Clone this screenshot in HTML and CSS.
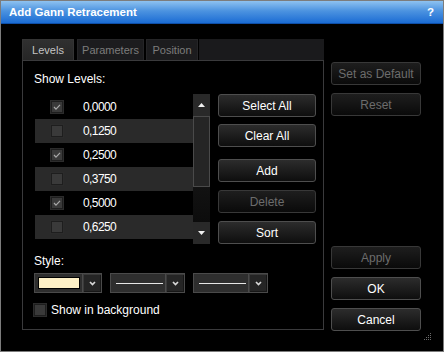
FILE: index.html
```html
<!DOCTYPE html>
<html>
<head>
<meta charset="utf-8">
<link rel="stylesheet" href="styles.css">
</head>
<body>
<div class="window">
  <div class="titlebar"><span class="title">Add Gann Retracement</span><span class="help">?</span></div>
  <div class="content">
    <div class="left">
      <div class="tabs">
        <div class="tab active w-levels">Levels</div>
        <div class="tab w-params">Parameters</div>
        <div class="tab w-pos">Position</div>
        <div class="tab-fill"></div>
      </div>
      <div class="panel">
        <div class="label">Show Levels:</div>
        <div class="levels">
          <div class="list">
            <div class="rows">
              <div class="row"><span class="checkbox"><svg viewBox="0 0 12 12" width="12" height="12"><polyline points="3,6 5,8.2 9,3.8" fill="none" stroke="#a8a8a8" stroke-width="1.2"/></svg></span><span class="val">0,0000</span></div>
              <div class="row alt"><span class="checkbox"></span><span class="val">0,1250</span></div>
              <div class="row"><span class="checkbox"><svg viewBox="0 0 12 12" width="12" height="12"><polyline points="3,6 5,8.2 9,3.8" fill="none" stroke="#a8a8a8" stroke-width="1.2"/></svg></span><span class="val">0,2500</span></div>
              <div class="row alt"><span class="checkbox"></span><span class="val">0,3750</span></div>
              <div class="row"><span class="checkbox"><svg viewBox="0 0 12 12" width="12" height="12"><polyline points="3,6 5,8.2 9,3.8" fill="none" stroke="#a8a8a8" stroke-width="1.2"/></svg></span><span class="val">0,5000</span></div>
              <div class="row alt"><span class="checkbox"></span><span class="val">0,6250</span></div>
            </div>
            <div class="scrollbar">
              <div class="sb-btn"><svg width="7" height="4" viewBox="0 0 7 4"><polygon points="3.5,0 7,4 0,4" fill="#f0f0f0"/></svg></div>
              <div class="sb-track"><div class="sb-thumb"></div></div>
              <div class="sb-btn"><svg width="7" height="4" viewBox="0 0 7 4"><polygon points="0,0 7,0 3.5,4" fill="#f0f0f0"/></svg></div>
            </div>
          </div>
          <div class="level-buttons">
            <div class="btn">Select All</div>
            <div class="btn mt7">Clear All</div>
            <div class="btn mt12">Add</div>
            <div class="btn mt8 disabled">Delete</div>
            <div class="btn mt8">Sort</div>
          </div>
        </div>
        <div class="label style-label">Style:</div>
        <div class="combos">
          <div class="combo color-combo">
            <div class="combo-value"><span class="swatch"></span></div>
            <div class="combo-btn"><svg width="7" height="5" viewBox="0 0 7 5"><polyline points="1,1 3.5,3.5 6,1" fill="none" stroke="#d8d8d8" stroke-width="1.7"/></svg></div>
          </div>
          <div class="combo line-combo">
            <div class="combo-value"><span class="line"></span></div>
            <div class="combo-btn"><svg width="7" height="5" viewBox="0 0 7 5"><polyline points="1,1 3.5,3.5 6,1" fill="none" stroke="#d8d8d8" stroke-width="1.7"/></svg></div>
          </div>
          <div class="combo line-combo">
            <div class="combo-value"><span class="line"></span></div>
            <div class="combo-btn"><svg width="7" height="5" viewBox="0 0 7 5"><polyline points="1,1 3.5,3.5 6,1" fill="none" stroke="#d8d8d8" stroke-width="1.7"/></svg></div>
          </div>
        </div>
        <div class="bg-check"><span class="checkbox"></span><span>Show in background</span></div>
      </div>
    </div>
    <div class="right">
      <div class="btn disabled">Set as Default</div>
      <div class="btn disabled">Reset</div>
      <div class="btn disabled push">Apply</div>
      <div class="btn">OK</div>
      <div class="btn">Cancel</div>
    </div>
  </div>
  <svg class="grip" width="8" height="7" viewBox="0 0 8 7">
    <rect x="6" y="0" width="1" height="1" fill="#6a6a6a"/>
    <rect x="4" y="2" width="1" height="1" fill="#6a6a6a"/>
    <rect x="6" y="2" width="1" height="1" fill="#6a6a6a"/>
    <rect x="2" y="4" width="1" height="1" fill="#6a6a6a"/>
    <rect x="4" y="4" width="1" height="1" fill="#6a6a6a"/>
    <rect x="6" y="4" width="1" height="1" fill="#6a6a6a"/>
    <rect x="0" y="6" width="1" height="1" fill="#6a6a6a"/>
    <rect x="2" y="6" width="1" height="1" fill="#6a6a6a"/>
    <rect x="4" y="6" width="1" height="1" fill="#6a6a6a"/>
    <rect x="6" y="6" width="1" height="1" fill="#6a6a6a"/>
  </svg>
</div>
</body>
</html>
```
FILE: styles.css
```css
html, body {
  margin: 0;
  padding: 0;
  background: #000;
}
body {
  font-family: "Liberation Sans", Arial, sans-serif;
  font-size: 12px;
  color: #fff;
}
.window {
  width: 444px;
  height: 352px;
  box-sizing: border-box;
  border: 1px solid #7c7c7c;
  background: #000;
  display: flex;
  flex-direction: column;
  position: relative;
}
.titlebar {
  height: 23px;
  flex: none;
  background: linear-gradient(#8ec2f0 0%, #4c93e0 45%, #1b6cd4 100%);
  border-bottom: 1px solid #0e4fa8;
  box-sizing: border-box;
  display: flex;
  align-items: center;
  justify-content: space-between;
  padding: 0 9px 0 8px;
  font-weight: bold;
  font-size: 11.5px;
  color: #fff;
}
.content {
  flex: 1;
  display: flex;
}
.left {
  margin-left: 21px;
  margin-top: 15px;
  width: 302px;
  display: flex;
  flex-direction: column;
}
.tabs {
  display: flex;
  height: 21px;
}
.tab {
  box-sizing: border-box;
  height: 21px;
  display: flex;
  align-items: center;
  justify-content: center;
  font-size: 11px;
  color: #7c7c7c;
  background: #1c1c1e;
  border: 1px solid #252527;
  border-bottom: none;
}
.tab.active {
  background: linear-gradient(#303030, #262626);
  border-color: #343434;
  color: #c4c4c4;
}
.w-levels { width: 52px; margin-right: 3px; }
.w-params { width: 67px; margin-right: 2px; }
.w-pos { width: 52px; margin-right: 1px; }
.tab-fill {
  flex: 1;
  background: #1a1a1c;
}
.panel {
  height: 270px;
  box-sizing: border-box;
  border: 1px solid #3a3a3c;
  padding: 11px 0 0 11px;
  display: flex;
  flex-direction: column;
}
.label {
  line-height: 14px;
  color: #fff;
}
.levels {
  margin-top: 8px;
  height: 150px;
  display: flex;
}
.list {
  width: 176px;
  display: flex;
}
.rows {
  width: 158px;
  padding: 1px 0 0 1px;
}
.row {
  height: 24px;
  display: flex;
  align-items: center;
  padding-left: 16px;
}
.row.alt {
  background: #2a2a2a;
}
.checkbox {
  width: 12px;
  height: 12px;
  box-sizing: border-box;
  background: #3a3a3a;
  border: 1px solid #1e1e1e;
  box-shadow: 0 0 0 1px #2c2c2c;
  display: inline-flex;
  flex: none;
}
.checkbox svg {
  margin: -1px;
}
.val {
  margin-left: 20px;
  font-size: 12px;
  letter-spacing: -0.6px;
  color: #fff;
}
.scrollbar {
  width: 17px;
  display: flex;
  flex-direction: column;
}
.sb-btn {
  height: 22px;
  flex: none;
  background: #292929;
  display: flex;
  align-items: center;
  justify-content: center;
}
.sb-track {
  flex: 1;
  background: linear-gradient(#1e1e1e, #0c0c0c);
}
.sb-thumb {
  height: 71px;
  box-sizing: border-box;
  border: 1px solid #4a4a4a;
  background: #252525;
}
.level-buttons {
  margin-left: 8px;
  width: 98px;
  display: flex;
  flex-direction: column;
}
.btn {
  height: 23px;
  box-sizing: border-box;
  border: 1px solid #4e4e4e;
  border-radius: 3px;
  background: linear-gradient(#2c2c2c, #0e0e0e);
  display: flex;
  align-items: center;
  justify-content: center;
  color: #fff;
  font-size: 12px;
  flex: none;
}
.btn.disabled {
  color: #6c6c6c;
  border-color: #383838;
  background: linear-gradient(#1e1e1e, #0a0a0a);
}
.mt7 { margin-top: 7px; }
.mt8 { margin-top: 8px; }
.mt12 { margin-top: 12px; }
.style-label {
  margin-top: 10px;
}
.combos {
  margin-top: 5px;
  display: flex;
  gap: 8px;
}
.combo {
  height: 20px;
  box-sizing: border-box;
  border: 1px solid #4a4a4a;
  background: #2e2e2e;
  display: flex;
}
.color-combo { width: 68px; }
.line-combo { width: 75px; }
.combo-value {
  flex: 1;
  display: flex;
  align-items: center;
  padding-left: 3px;
}
.swatch {
  width: 42px;
  height: 12px;
  box-sizing: border-box;
  background: #fdf0c6;
  border: 1px solid #000;
}
.line {
  margin-left: 2px;
  width: 47px;
  height: 1px;
  background: #e6e6e6;
}
.combo-btn {
  width: 19px;
  box-sizing: border-box;
  border-left: 1px solid #4a4a4a;
  background: #252525;
  box-shadow: inset 1px 1px 0 #3a3a3a, inset -1px -1px 0 #161616;
  display: flex;
  align-items: center;
  justify-content: center;
}
.bg-check {
  margin-top: 10px;
  height: 14px;
  display: flex;
  align-items: center;
  gap: 5px;
  line-height: 14px;
}
.right {
  margin-left: 7px;
  width: 90px;
  padding: 38px 0 20px;
  display: flex;
  flex-direction: column;
  gap: 8px;
}
.right .btn { width: 90px; }
.push { margin-top: auto; }
.grip {
  position: absolute;
  right: 11px;
  bottom: 11px;
}
```
